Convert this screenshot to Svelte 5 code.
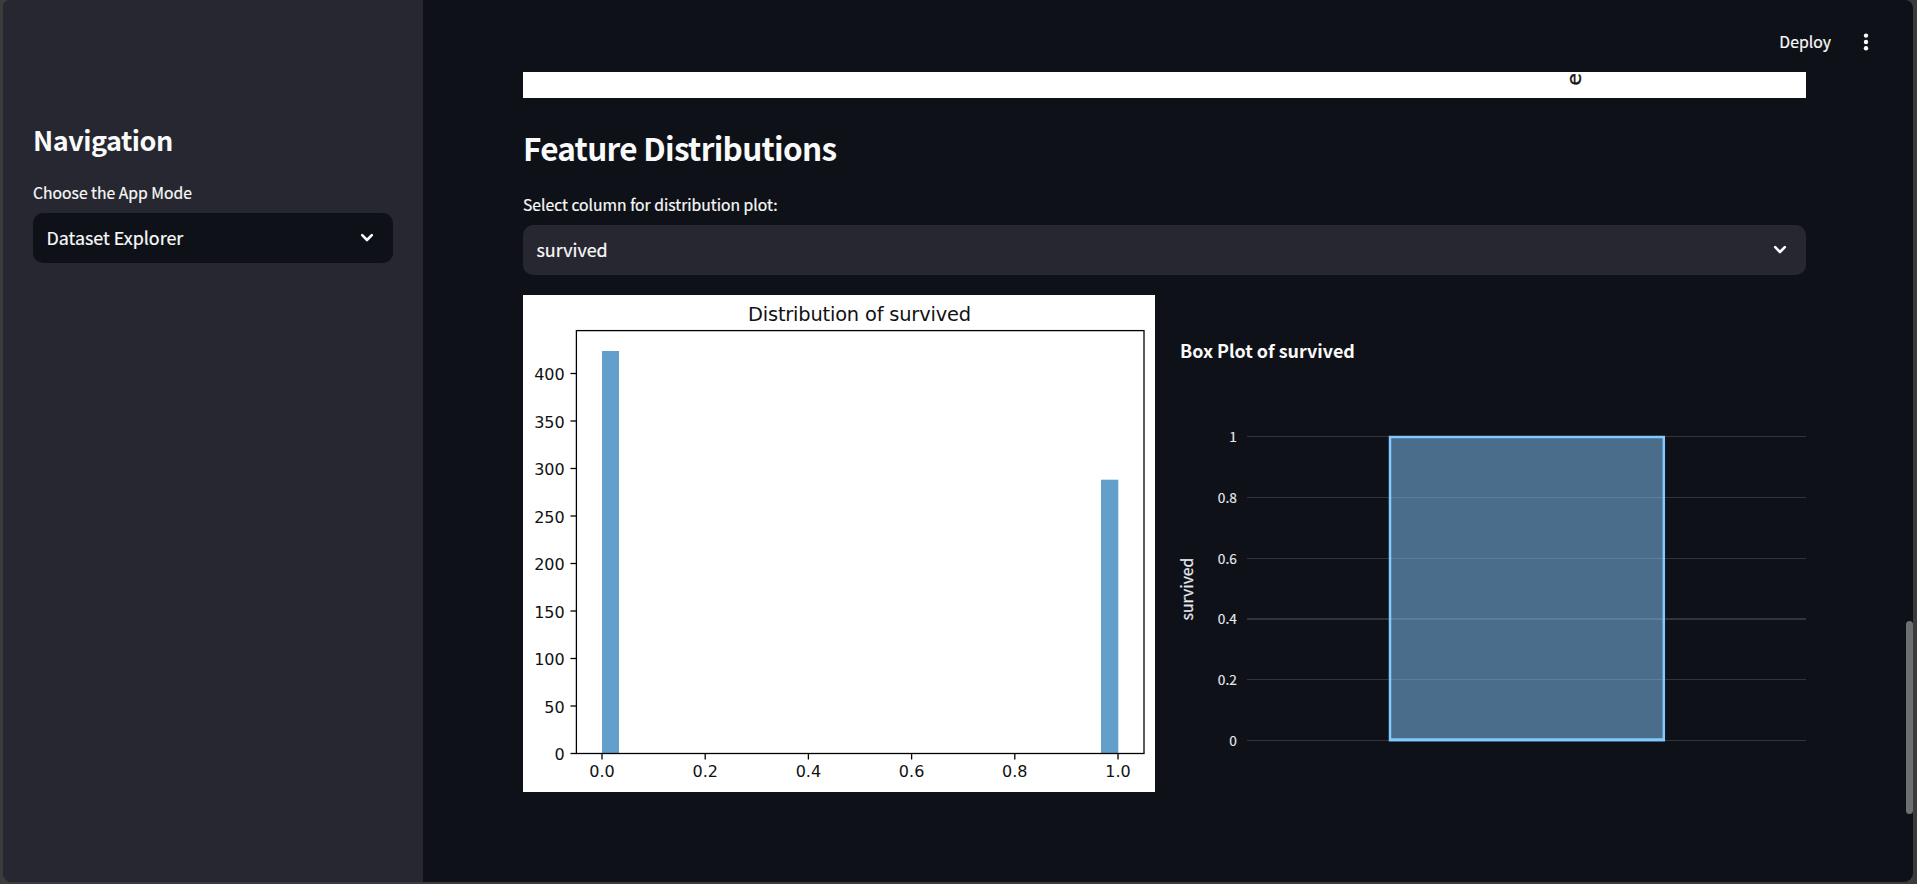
<script>
  const histY = [0, 50, 100, 150, 200, 250, 300, 350, 400].map((v) => ({ v, y: 458.5 - v * 0.95 }));
  const histX = ['0.0', '0.2', '0.4', '0.6', '0.8', '1.0'].map((v, i) => ({ v, x: 79 + i * 103.2 }));
  const boxY = [
    { v: '1', y: 141, h: 1 },
    { v: '0.8', y: 202, h: 1 },
    { v: '0.6', y: 263, h: 1 },
    { v: '0.4', y: 323, h: 2 },
    { v: '0.2', y: 384, h: 1 },
    { v: '0', y: 445, h: 1 }
  ];
</script>

{#snippet chevron()}
  <svg class="chevron" width="14" height="10" viewBox="0 0 14 10"><path d="M2.2 2.2 7 7 11.8 2.2" /></svg>
{/snippet}

<div class="window">
  <aside>
    <h2>Navigation</h2>
    <div class="label">Choose the App Mode</div>
    <div class="select dark"><span>Dataset Explorer</span>{@render chevron()}</div>
  </aside>
  <main>
    <header>
      <span class="deploy">Deploy</span>
      <svg width="8" height="24" viewBox="0 0 8 24">
        <circle cx="4" cy="5.6" r="2.2" /><circle cx="4" cy="12" r="2.2" /><circle cx="4" cy="18.3" r="2.2" />
      </svg>
    </header>
    <section>
      <svg class="strip" width="1283" height="26" viewBox="0 0 1283 26">
        <rect width="1283" height="26" fill="#fff" />
        <text transform="translate(1058 13.6) rotate(-90)" font-size="20" fill="#151515" stroke="#151515" stroke-width=".3">embarked</text>
      </svg>
      <h3>Feature Distributions</h3>
      <div class="label">Select column for distribution plot:</div>
      <div class="select"><span>survived</span>{@render chevron()}</div>
      <div class="charts">
        <svg class="hist" width="632" height="497" viewBox="0 0 632 497">
          <rect width="632" height="497" fill="#fff" />
          <text x="336.5" y="26.3" text-anchor="middle" font-size="19.4" textLength="223">Distribution of survived</text>
          <rect x="79" y="56" width="17" height="402.5" fill="#629fca" />
          <rect x="578" y="184.7" width="17.3" height="273.8" fill="#629fca" />
          <rect x="53.4" y="35.6" width="567.6" height="422.9" class="line" />
          {#each histY as t}
            <path d="M47.5 {t.y}h6" class="line" />
            <text x="41.7" y={t.y + 6.6} text-anchor="end">{t.v}</text>
          {/each}
          {#each histX as t}
            <path d="M{t.x} 458.5v6" class="line" />
            <text x={t.x} y="482" text-anchor="middle">{t.v}</text>
          {/each}
        </svg>
        <svg class="box" width="626" height="497" viewBox="0 0 626 497">
          <text x="0" y="63" class="title">Box Plot of survived</text>
          {#each boxY as t}
            <rect x="67" y={t.y} width="559" height={t.h} fill="#31333f" />
            <text x="56.8" y={t.y + 6.3} text-anchor="end" class="tick">{t.v}</text>
          {/each}
          <rect x="210" y="142" width="273.8" height="303.2" fill="#83c9ff" fill-opacity=".5" stroke="#83c9ff" stroke-width="2.5" />
          <path d="M210 444.5h273.8" stroke="#83c9ff" stroke-width="2.5" />
          <text transform="translate(13 325.5) rotate(-90)" class="axis">survived</text>
        </svg>
      </div>
    </section>
  </main>
  <div class="thumb"></div>
</div>

<style>
  :global(body) {
    background: #3b3b3b;
    overflow: hidden;
  }
  .window {
    position: relative;
    display: flex;
    width: 1910px;
    height: 882px;
    margin: 0 4px 2px 3px;
    border-radius: 8px 8px 9px 9px;
    overflow: hidden;
    background: #0e1117;
    color: #fafafa;
    font-family: "Noto Sans CJK SC", "Noto Sans", sans-serif;
    font-kerning: normal;
  }
  aside {
    box-sizing: border-box;
    width: 420px;
    flex: none;
    background: #262730;
    padding: 122px 30px 0;
  }
  h2 {
    margin: 0 0 22px;
    font-size: 27px;
    line-height: 36px;
    font-weight: 600;
    letter-spacing: -0.5px;
  }
  h3 {
    margin: 28px 0 24px;
    font-size: 31.5px;
    line-height: 42px;
    font-weight: 600;
    letter-spacing: -0.7px;
  }
  .label {
    height: 26px;
    line-height: 26px;
    font-size: 15.7px;
    -webkit-text-stroke: 0.2px #fafafa;
  }
  .select {
    display: flex;
    align-items: center;
    justify-content: space-between;
    box-sizing: border-box;
    height: 50px;
    margin-top: 7px;
    padding: 0 19px 0 13.5px;
    border-radius: 10px;
    background: #262730;
    font-size: 17.9px;
    line-height: 48px;
    -webkit-text-stroke: 0.2px #fafafa;
  }
  .select span {
    height: 50px;
  }
  .dark {
    background: #0e1117;
  }
  .chevron path {
    fill: none;
    stroke: #fafafa;
    stroke-width: 2.6;
    stroke-linecap: round;
    stroke-linejoin: round;
  }
  main {
    flex: 1;
  }
  header {
    display: flex;
    align-items: center;
    justify-content: flex-end;
    box-sizing: border-box;
    height: 72px;
    padding: 12px 43.5px 0 0;
    gap: 30.5px;
    fill: #fafafa;
  }
  .deploy {
    font-size: 15.8px;
    line-height: 26px;
    margin-top: -1px;
    -webkit-text-stroke: 0.2px #fafafa;
  }
  section {
    width: 1283px;
    margin-left: 100px;
  }
  svg {
    display: block;
    flex: none;
  }
  .strip,
  .hist {
    font-family: "DejaVu Sans", sans-serif;
  }
  .hist {
    font-size: 16px;
    fill: #111;
  }
  .line {
    fill: none;
    stroke: #000;
    stroke-width: 1.3;
  }
  .charts {
    display: flex;
    gap: 25px;
    margin-top: 20px;
  }
  .box {
    fill: #e6eaf1;
    overflow: visible;
  }
  .title {
    font-size: 17.9px;
    font-weight: 700;
    fill: #fafafa;
  }
  .tick {
    font-size: 13.7px;
    stroke: #e6eaf1;
    stroke-width: 0.15px;
  }
  .axis {
    font-size: 15.8px;
    stroke: #e6eaf1;
    stroke-width: 0.2px;
  }
  .thumb {
    position: absolute;
    right: 0;
    top: 621px;
    width: 7px;
    height: 193px;
    border-radius: 3.5px;
    background: #6e6f73;
  }
</style>
